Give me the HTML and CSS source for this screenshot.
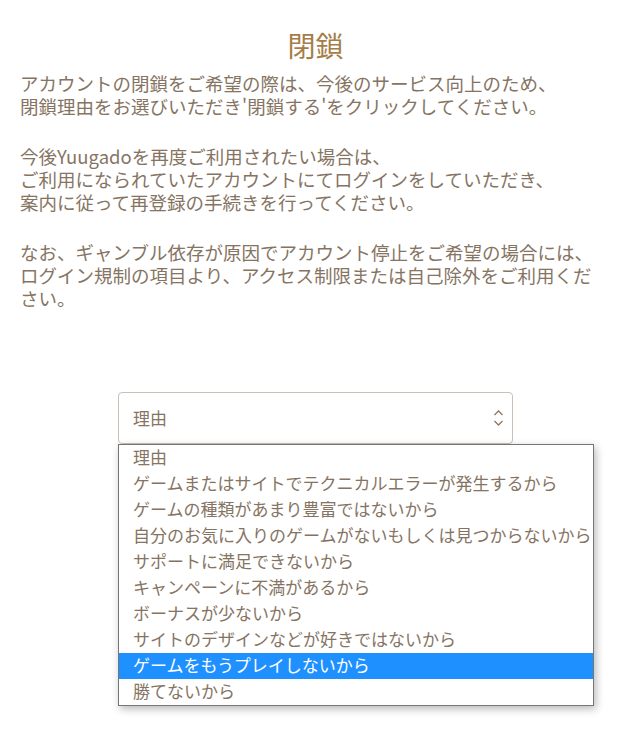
FILE: index.html
```html
<!DOCTYPE html>
<html lang="ja">
<head>
<meta charset="utf-8">
<title>閉鎖</title>
<link rel="stylesheet" href="styles.css">
</head>
<body>
<main class="page">
  <h1 class="title">閉鎖</h1>
  <p class="para">アカウントの閉鎖をご希望の際は、今後のサービス向上のため、<br>閉鎖理由をお選びいただき'閉鎖する'をクリックしてください。</p>
  <p class="para">今後Yuugadoを再度ご利用されたい場合は、<br>ご利用になられていたアカウントにてログインをしていただき、<br>案内に従って再登録の手続きを行ってください。</p>
  <p class="para">なお、ギャンブル依存が原因でアカウント停止をご希望の場合には、<br>ログイン規制の項目より、アクセス制限または自己除外をご利用くだ<br>さい。</p>

  <div class="picker">
    <div class="picker-box">
      <span class="picker-value">理由</span>
      <svg class="picker-arrow" width="11" height="18" viewBox="0 0 11 18" aria-hidden="true">
        <polyline points="1.5,6 5.5,2 9.5,6" fill="none" stroke="#8a7866" stroke-width="1.3"/>
        <polyline points="1.5,12 5.5,16 9.5,12" fill="none" stroke="#8a7866" stroke-width="1.3"/>
      </svg>
    </div>
    <div class="reason-list">
      <div class="reason-item">理由</div>
      <div class="reason-item">ゲームまたはサイトでテクニカルエラーが発生するから</div>
      <div class="reason-item">ゲームの種類があまり豊富ではないから</div>
      <div class="reason-item">自分のお気に入りのゲームがないもしくは見つからないから</div>
      <div class="reason-item">サポートに満足できないから</div>
      <div class="reason-item">キャンペーンに不満があるから</div>
      <div class="reason-item">ボーナスが少ないから</div>
      <div class="reason-item">サイトのデザインなどが好きではないから</div>
      <div class="reason-item reason-item-active">ゲームをもうプレイしないから</div>
      <div class="reason-item">勝てないから</div>
    </div>
  </div>
</main>
</body>
</html>
```

FILE: styles.css
```css
html, body {
  margin: 0;
  padding: 0;
  background: #ffffff;
}

body {
  font-family: "Noto Sans CJK JP", "Noto Sans", sans-serif;
  color: #867463;
}

.page {
  box-sizing: border-box;
  min-height: 733px;
  padding: 28px 10px 0 20px;
}

.title {
  margin: 0 0 10px;
  font-size: 28px;
  line-height: 34px;
  font-weight: 400;
  text-align: center;
  color: #a57d48;
}

.para {
  margin: 0 0 27px;
  font-size: 18.5px;
  line-height: 23px;
  white-space: nowrap;
}

.picker {
  position: relative;
  width: 395px;
  margin: 82px auto 0;
}

.picker-box {
  box-sizing: border-box;
  height: 52px;
  border: 1px solid #cbc0b8;
  border-radius: 4px;
  display: flex;
  align-items: center;
  justify-content: space-between;
  padding: 0 8px 0 14px;
  background: #fff;
}

.picker-value {
  font-size: 17px;
  line-height: 22px;
  color: #867463;
}

.picker-arrow {
  display: block;
}

.reason-list {
  position: absolute;
  top: 52px;
  left: 0;
  width: 476px;
  box-sizing: border-box;
  background: #fff;
  border: 1px solid #767676;
  box-shadow: 2px 3px 8px rgba(0, 0, 0, 0.28);
  z-index: 2;
}

.reason-item {
  height: 26px;
  line-height: 24px;
  padding: 0 0 2px 14px;
  box-sizing: border-box;
  font-size: 17px;
  white-space: nowrap;
  color: #867463;
}

.reason-item-active {
  background: #1e90ff;
  color: #ffffff;
}
```
